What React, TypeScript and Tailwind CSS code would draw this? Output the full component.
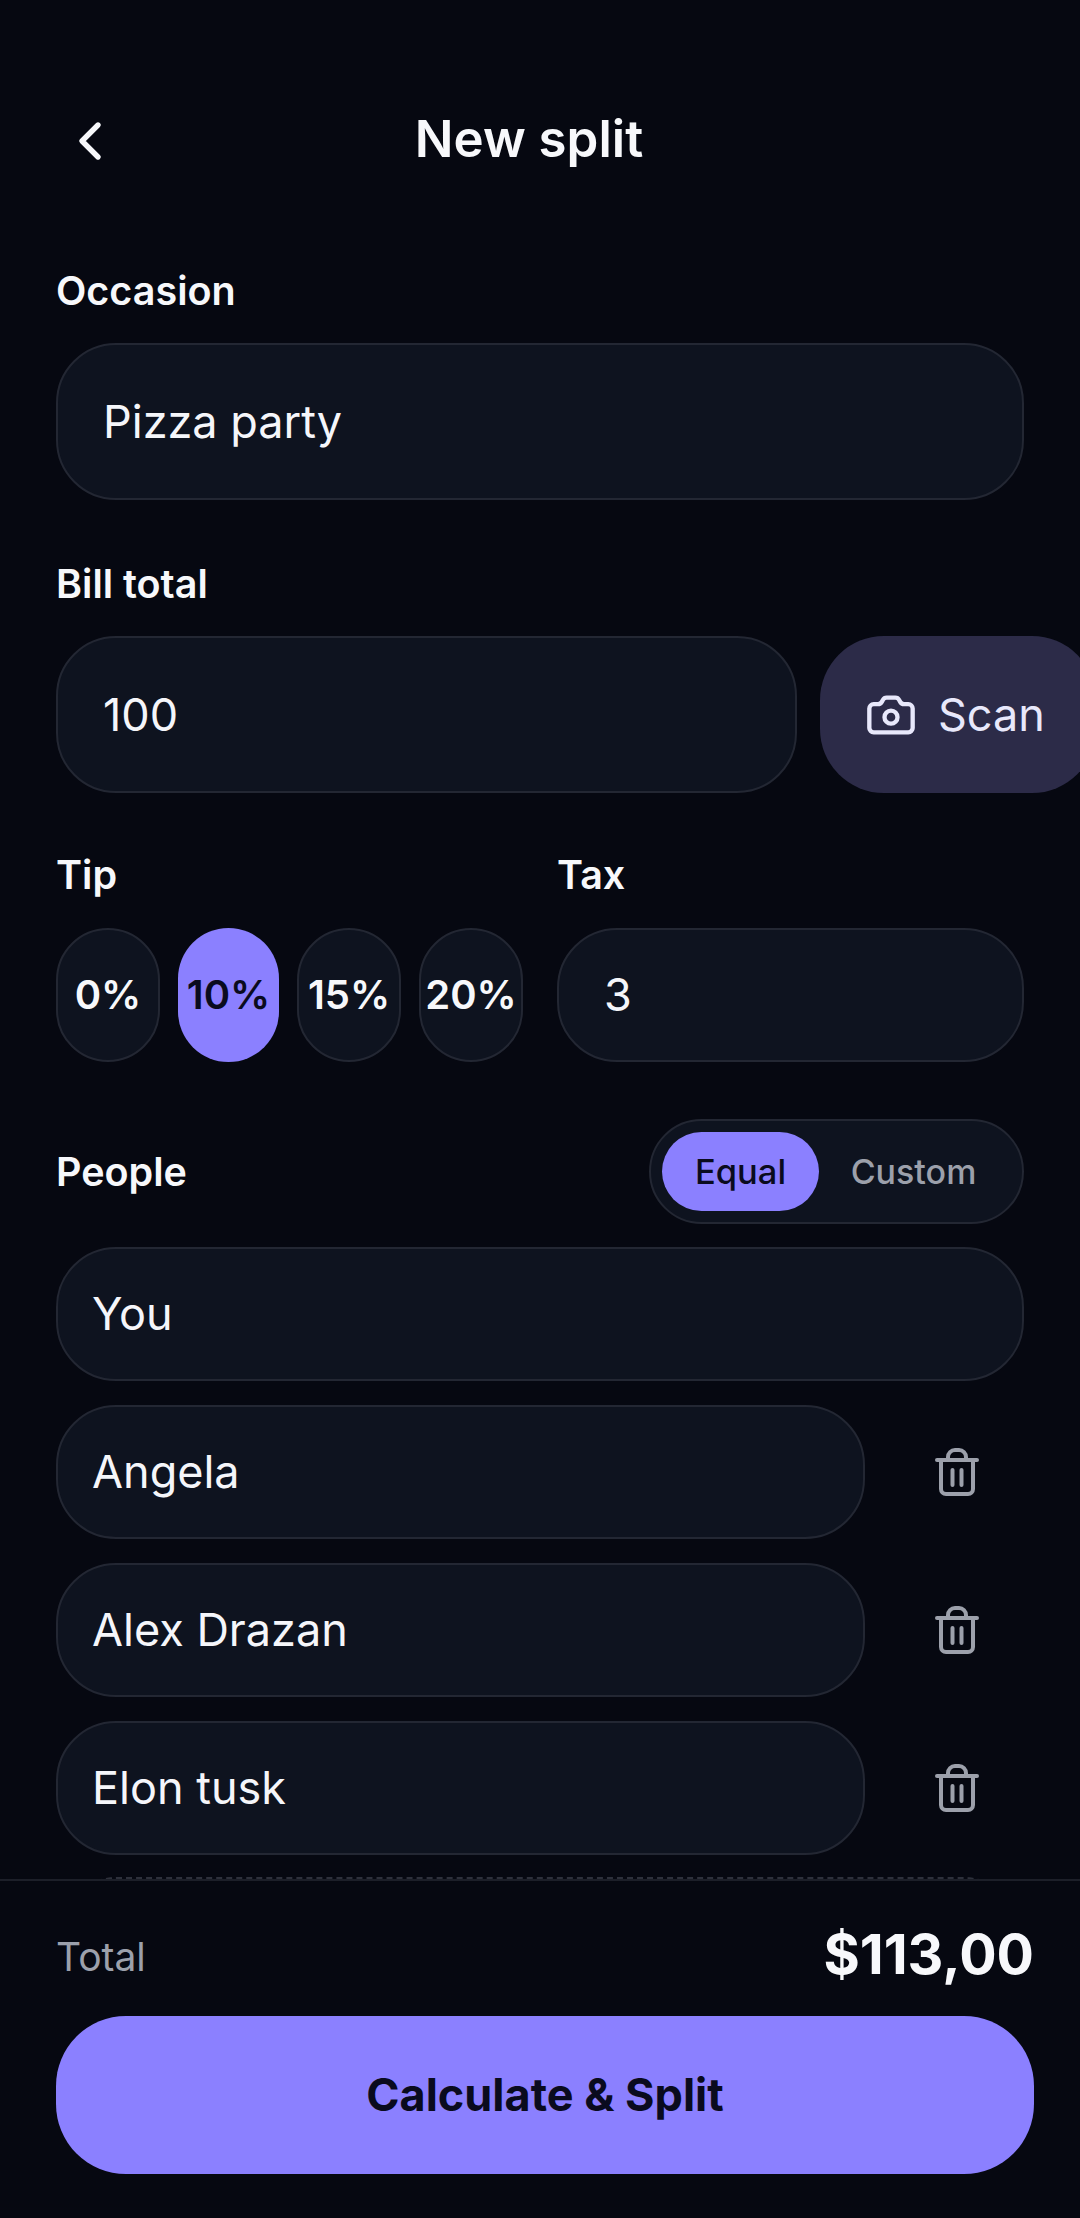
import { Camera, ChevronLeft } from "lucide-react";

const field = "flex items-center rounded-[60px] border-2 border-[#232733] bg-[#0e131f] text-[#f5f6fa]";

function Label({ children, className = "" }: { children: React.ReactNode; className?: string }) {
  return <div className={`text-[39.5px] leading-[46px] font-semibold text-[#f7f8fb] ${className}`}>{children}</div>;
}

function TrashIcon() {
  return (
    <svg width="44" height="48" viewBox="0 0 44 48" fill="none" stroke="#9ca0ab" strokeWidth="4" strokeLinecap="round" strokeLinejoin="round" aria-hidden="true">
      <path d="M2 12h40" />
      <path d="M13 12V9a7 7 0 0 1 7-7h4a7 7 0 0 1 7 7v3" />
      <path d="M6 12v29a5 5 0 0 0 5 5h22a5 5 0 0 0 5-5V12" />
      <path d="M17.5 22v15" />
      <path d="M26.5 22v15" />
    </svg>
  );
}

function Chip({ label, active, width }: { label: string; active?: boolean; width: string }) {
  return (
    <div className={`flex h-[134px] items-center justify-center rounded-full text-[40px] font-semibold ${width} ${active ? "bg-[#8b80ff] text-[#0a0b1e]" : "border-2 border-[#232733] bg-[#0e131f] text-[#f7f8fb]"}`}>
      {label}
    </div>
  );
}

function Person({ name, removable }: { name: string; removable?: boolean }) {
  return (
    <div className="flex h-[134px] items-center">
      <div className={`${field} h-full pl-[34px] text-[45px] ${removable ? "w-[809px]" : "w-full"}`}>{name}</div>
      {removable && (
        <div className="flex flex-1 items-center justify-center pl-[24px]">
          <TrashIcon />
        </div>
      )}
    </div>
  );
}

export default function App() {
  return (
    <div className="relative h-[2218px] w-[1080px] overflow-hidden bg-[#060811] font-['Inter',sans-serif]">
      <div className="flex flex-col px-[56px] pt-[110px]">
        <div className="relative flex h-[58px] items-center justify-center pr-[22px]">
          <ChevronLeft className="absolute left-[2px] top-[-1px] text-[#f7f8fb]" size={64} strokeWidth={2} />
          <div className="text-[51px] leading-[58px] font-semibold text-[#f7f8fb]">New split</div>
        </div>

        <Label className="mt-[100px]">Occasion</Label>
        <div className={`${field} mt-[29px] h-[157px] pl-[45px] text-[45px]`}>Pizza party</div>

        <Label className="mt-[61px]">Bill total</Label>
        <div className="mt-[29px] flex h-[157px] gap-[23px]">
          <div className={`${field} w-[741px] shrink-0 pl-[45px] text-[45px]`}>100</div>
          <div className="flex w-[276px] shrink-0 items-center gap-[21px] rounded-[64px] bg-[#2c2b48] pl-[45px] text-[45px] text-[#e8e8fb]">
            <Camera size={52} strokeWidth={2} />
            Scan
          </div>
        </div>

        <div className="mt-[59px] flex gap-[34px]">
          <div className="w-[467px] shrink-0">
            <Label>Tip</Label>
            <div className="mt-[30px] flex gap-[18px]">
              <Chip label="0%" width="w-[104px]" />
              <Chip label="10%" width="w-[101px]" active />
              <Chip label="15%" width="w-[104px]" />
              <Chip label="20%" width="w-[104px]" />
            </div>
          </div>
          <div className="flex-1">
            <Label>Tax</Label>
            <div className={`${field} mt-[30px] h-[134px] pl-[45px] text-[45px]`}>3</div>
          </div>
        </div>

        <div className="mt-[57px] flex h-[105px] items-center justify-between">
          <Label>People</Label>
          <div className="flex h-full w-[375px] items-center rounded-full border-2 border-[#232733] bg-[#0e131f] pl-[11px]">
            <div className="flex h-[79px] w-[157px] items-center justify-center rounded-full bg-[#8b80ff] text-[34.5px] font-medium text-[#0a0b1e]">Equal</div>
            <div className="flex-1 pr-[14px] text-center text-[34px] font-medium text-[#9ca0ab]">Custom</div>
          </div>
        </div>

        <div className="mt-[23px] flex flex-col gap-[24px]">
          <Person name="You" />
          <Person name="Angela" removable />
          <Person name="Alex Drazan" removable />
          <Person name="Elon tusk" removable />
          <div className="-mt-[2px] h-[134px] rounded-[60px] border-2 border-dashed border-[#2d303b]" />
        </div>
      </div>

      <div className="absolute inset-x-0 bottom-0 h-[339px] border-t-2 border-[#1c1f29] bg-[#060811] pl-[56px] pr-[46px] pt-[24px]">
        <div className="flex h-[98px] items-center justify-between">
          <div className="mt-[6px] text-[39px] text-[#9ca0ab]">Total</div>
          <div className="text-[55.5px] font-bold text-[#f7f8fb]">$113,00</div>
        </div>
        <div className="mt-[13px] flex h-[158px] items-center justify-center rounded-[70px] bg-[#8b80ff] text-[45px] font-bold text-[#0a0b1e]">Calculate &amp; Split</div>
      </div>
    </div>
  );
}
